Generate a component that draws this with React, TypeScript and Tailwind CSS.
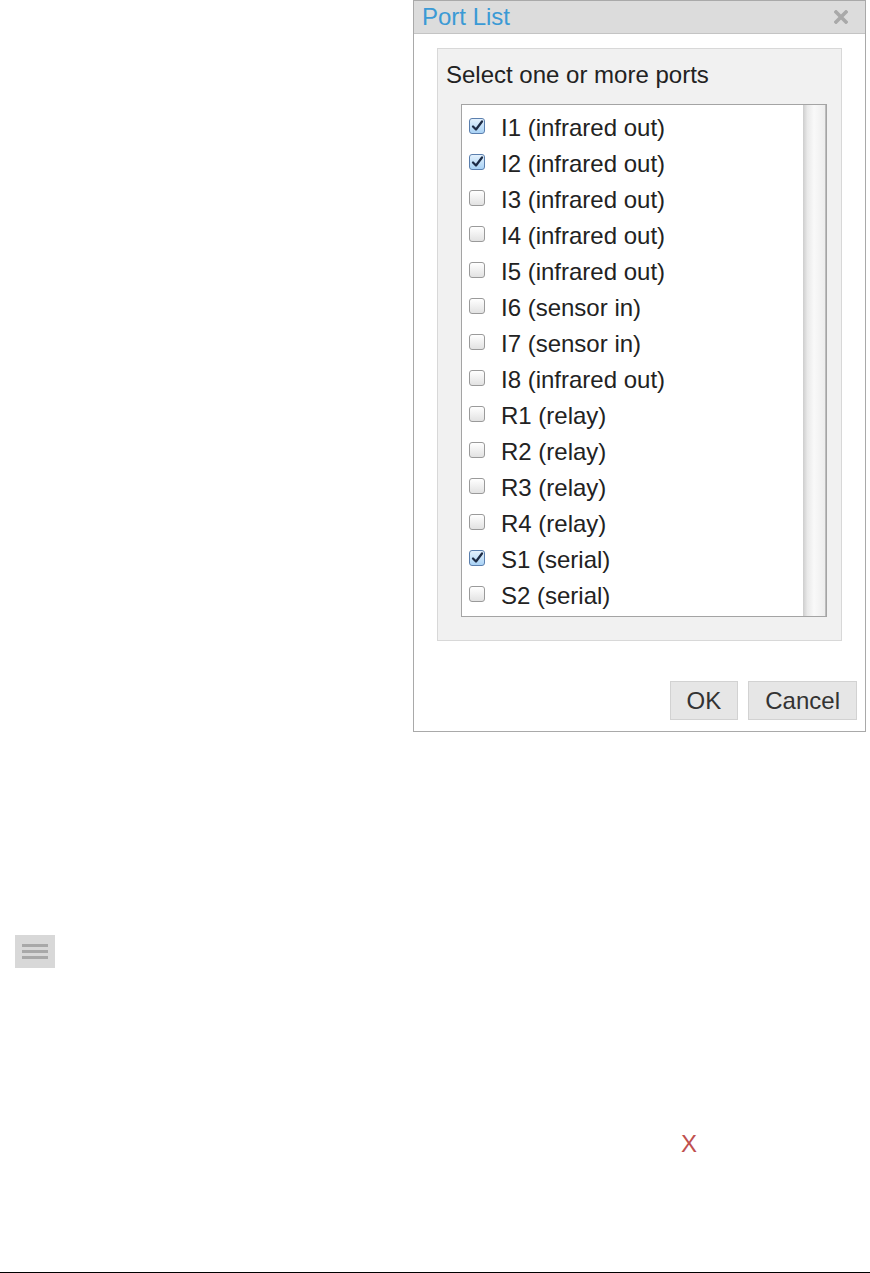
import React, { useState } from "react";

interface Port {
  id: string;
  label: string;
  checked: boolean;
}

const initialPorts: Port[] = [
  { id: "I1", label: "I1 (infrared out)", checked: true },
  { id: "I2", label: "I2 (infrared out)", checked: true },
  { id: "I3", label: "I3 (infrared out)", checked: false },
  { id: "I4", label: "I4 (infrared out)", checked: false },
  { id: "I5", label: "I5 (infrared out)", checked: false },
  { id: "I6", label: "I6 (sensor in)", checked: false },
  { id: "I7", label: "I7 (sensor in)", checked: false },
  { id: "I8", label: "I8 (infrared out)", checked: false },
  { id: "R1", label: "R1 (relay)", checked: false },
  { id: "R2", label: "R2 (relay)", checked: false },
  { id: "R3", label: "R3 (relay)", checked: false },
  { id: "R4", label: "R4 (relay)", checked: false },
  { id: "S1", label: "S1 (serial)", checked: true },
  { id: "S2", label: "S2 (serial)", checked: false },
];

const Box: React.FC<{ checked: boolean }> = ({ checked }) =>
  checked ? (
    <span className="flex h-[16px] w-[16px] shrink-0 items-center justify-center rounded-[3px] border border-[#5b7fae] bg-[linear-gradient(to_bottom,#e3f1fd,#a9d2f5)]">
      <svg width="13" height="12" viewBox="0 0 13 12">
        <path
          d="M2 6.5 L5 9.5 L11 1.5"
          fill="none"
          stroke="#1d2b45"
          strokeWidth="2.2"
          strokeLinecap="round"
          strokeLinejoin="round"
        />
      </svg>
    </span>
  ) : (
    <span className="block h-[16px] w-[16px] shrink-0 rounded-[3px] border border-[#9a9a9a] bg-[linear-gradient(to_bottom,#ffffff,#e2e2e2)]" />
  );

const App: React.FC = () => {
  const [ports, setPorts] = useState<Port[]>(initialPorts);

  const toggle = (id: string) => {
    setPorts((prev) =>
      prev.map((p) => (p.id === id ? { ...p, checked: !p.checked } : p))
    );
  };

  return (
    <div className="flex h-[1273px] flex-col bg-white font-['Liberation_Sans',Arial,sans-serif]">
      {/* dialog */}
      <div className="ml-[413px] flex h-[732px] w-[453px] flex-col border border-[#a9a9a9] bg-white">
        <div className="flex h-[33px] items-center justify-between border-b border-[#c4c4c4] bg-[#dcdcdc] pl-[8px] pr-[17px]">
          <span className="text-[24px] leading-[32px] text-[#3b9ad5]">Port List</span>
          <svg width="14" height="14" viewBox="0 0 14 14">
            <path
              d="M2 2 L12 12 M12 2 L2 12"
              stroke="#a9a9a9"
              strokeWidth="3.6"
              strokeLinecap="square"
            />
          </svg>
        </div>

        <div className="mx-[23px] mt-[14px] h-[593px] border border-[#d8d8d8] bg-[#f1f1f1] pt-[12px]">
          <div className="pl-[8px] text-[24px] leading-[28px] text-[#222]">
            Select one or more ports
          </div>
          <div className="ml-[23px] mr-[14px] mt-[15px] flex h-[513px] border border-[#a4a4a4] bg-white">
            <div className="flex-1 pl-[7px] pt-[5px]">
              {ports.map((p) => (
                <div
                  key={p.id}
                  onClick={() => toggle(p.id)}
                  className="flex h-[36px] cursor-default items-start"
                >
                  <div className="mt-[8px] flex">
                    <Box checked={p.checked} />
                  </div>
                  <span className="ml-[16px] text-[24px] leading-[36px] text-[#222]">
                    {p.label}
                  </span>
                </div>
              ))}
            </div>
            <div className="w-[23px] border-r border-[#bdbdbd] bg-[linear-gradient(to_right,#cdcdcd,#e9e9e9_20%,#f9f9f9_50%,#ededed)]" />
          </div>
        </div>

        <div className="mt-auto mb-[11px] flex justify-end gap-[10px] pr-[8px]">
          <button className="h-[39px] border border-[#d2d2d2] bg-[#e6e6e6] px-[16px] text-[24px] leading-[37px] text-[#333]">
            OK
          </button>
          <button className="h-[39px] border border-[#d2d2d2] bg-[#e6e6e6] px-[16px] text-[24px] leading-[37px] text-[#333]">
            Cancel
          </button>
        </div>
      </div>

      {/* menu toggle */}
      <div className="ml-[15px] mt-[203px] flex h-[33px] w-[40px] flex-col items-center justify-center gap-[3px] bg-[#d8d8d8]">
        <span className="h-[3px] w-[26px] bg-[#a8a8a8]" />
        <span className="h-[3px] w-[26px] bg-[#a8a8a8]" />
        <span className="h-[3px] w-[26px] bg-[#a8a8a8]" />
      </div>

      <div className="ml-[681px] mt-[162px] text-[24px] leading-[28px] text-[#c0504e]">X</div>

      <div className="mt-auto h-[1px] w-full bg-black" />
    </div>
  );
};

export default App;
